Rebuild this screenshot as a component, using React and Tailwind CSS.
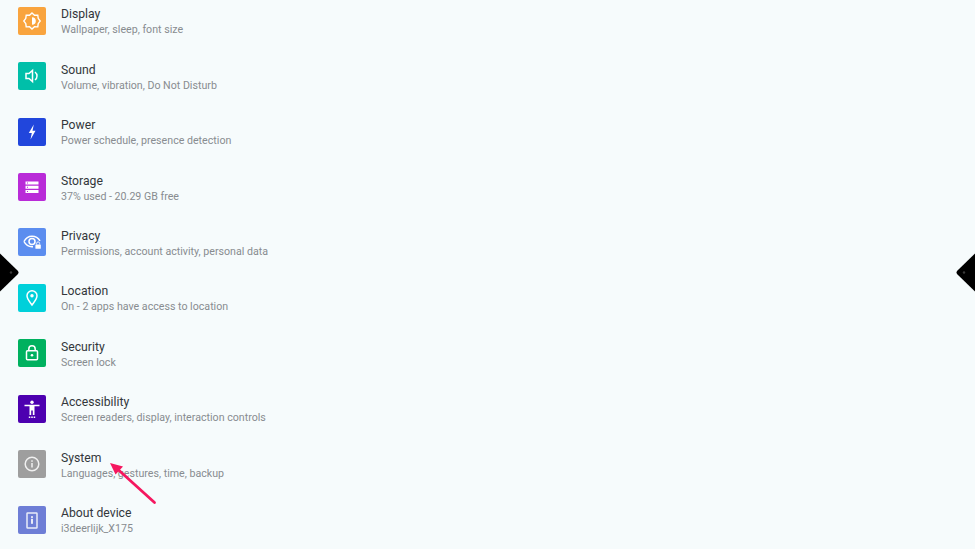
const W = { fill: "white" };
const S = { fill: "none", stroke: "white", strokeWidth: 1.5 };

const icons = {
  display: (
    <g>
      <path d="M14 6l2.500 2.200 3.300-.100.400 3.200L22.200 14l-2 2.700-.4 3.200-3.300-.100L14 22l-2.500-2.200-3.300.100-.4-3.200L5.800 14l2-2.700.4-3.200 3.300.100z" fill="none" stroke="white" strokeWidth="1.400" />
      <path d="M14 10.200a3.800 3.800 0 0 1 0 7.600z" {...W} />
    </g>
  ),
  sound: (
    <g>
      <path d="M8 11.500h3l3.500-3v11l-3.500-3H8z" fill="none" stroke="white" strokeWidth="1.500" />
      <path d="M17 10a5 5 0 0 1 0 8" fill="none" stroke="white" strokeWidth="1.500" />
    </g>
  ),
  power: <path d="M15.800 6.500l-5 8.500h3l-1.300 6.500 5-8.800h-3z" {...W} />,
  storage: (
    <g>
      <path fillRule="evenodd" d="M7.500 8.500h13v3h-13zM9 9.500h1v1H9z" {...W} />
      <path fillRule="evenodd" d="M7.500 12.700h13v3h-13zM9 13.700h1v1H9z" {...W} />
      <path fillRule="evenodd" d="M7.500 16.900h13v3h-13zM9 17.900h1v1H9z" {...W} />
    </g>
  ),
  privacy: (
    <g>
      <path d="M6 13.500c1.700-3.300 4.700-5.200 8-5.200s6.200 1.600 8 4.600" {...S} />
      <path d="M6 13.500c1.700 3.300 4.700 5.200 8 5.200h1" {...S} />
      <circle cx="14" cy="13.500" r="3" {...S} />
      <rect x="17.400" y="16.400" width="5.400" height="4.400" rx=".6" {...W} />
      <path d="M18.600 16.400v-1a1.500 1.500 0 0 1 3 0v1" fill="none" stroke="white" strokeWidth=".9" />
    </g>
  ),
  location: (
    <g>
      <path d="M14 6.800a5 5 0 0 0-5 5c0 3.400 3.400 6.800 5 9.200 1.600-2.400 5-5.800 5-9.200a5 5 0 0 0-5-5z" {...S} />
      <circle cx="14" cy="11.800" r="1.700" {...W} />
    </g>
  ),
  security: (
    <g>
      <rect x="8.500" y="11.800" width="11" height="9" rx="1" {...S} />
      <path d="M10.800 11.800V10a3.200 3.200 0 0 1 6.400 0v1.800" {...S} />
      <circle cx="14" cy="16.300" r="1.300" {...W} />
    </g>
  ),
  accessibility: (
    <g>
      <circle cx="14" cy="7.300" r="1.700" {...W} />
      <path d="M6.500 9.800h15v1.500h-5V20h-1.700v-4.500h-1.600V20h-1.700v-8.700h-5z" {...W} />
      <rect x="10.800" y="21.500" width="1.500" height="1.500" {...W} />
      <rect x="13.250" y="21.500" width="1.500" height="1.500" {...W} />
      <rect x="15.700" y="21.500" width="1.500" height="1.500" {...W} />
    </g>
  ),
  system: (
    <g opacity=".85">
      <circle cx="14" cy="14" r="6.800" {...S} />
      <rect x="13.250" y="13" width="1.500" height="4.500" {...W} />
      <rect x="13.250" y="10.300" width="1.500" height="1.500" {...W} />
    </g>
  ),
  about: (
    <g opacity=".85">
      <rect x="9" y="7" width="10" height="15" rx=".6" {...S} />
      <rect x="13" y="12.800" width="2" height="5" {...W} />
      <rect x="13" y="10.200" width="2" height="1.700" {...W} />
    </g>
  ),
};

const rows = [
  { k: "display", c: "bg-[#f9a43e]", t: "Display", s: "Wallpaper, sleep, font size" },
  { k: "sound", c: "bg-[#00bfa9]", t: "Sound", s: "Volume, vibration, Do Not Disturb" },
  { k: "power", c: "bg-[#2146dc]", t: "Power", s: "Power schedule, presence detection" },
  { k: "storage", c: "bg-[#b92bd8]", t: "Storage", s: "37% used - 20.29 GB free" },
  { k: "privacy", c: "bg-[#5b8def]", t: "Privacy", s: "Permissions, account activity, personal data" },
  { k: "location", c: "bg-[#00d0da]", t: "Location", s: "On - 2 apps have access to location" },
  { k: "security", c: "bg-[#00b15f]", t: "Security", s: "Screen lock" },
  { k: "accessibility", c: "bg-[#4d00b0]", t: "Accessibility", s: "Screen readers, display, interaction controls" },
  { k: "system", c: "bg-[#9e9e9e]", t: "System", s: "Languages, gestures, time, backup" },
  { k: "about", c: "bg-[#6e7ed6]", t: "About device", s: "i3deerlijk_X175" },
];

function Row({ k, c, t, s }) {
  return (
    <div className="flex h-[55.44px] shrink-0 items-center pl-[18px]">
      <div className={`mr-[15px] h-[28px] w-[28px] shrink-0 rounded-[2px] ${c}`}>
        <svg width="28" height="28" viewBox="0 0 28 28">{icons[k]}</svg>
      </div>
      <div className="flex flex-col pt-[2px]">
        <div className="text-[12.2px] leading-[16px] text-[#33373b]">{t}</div>
        <div className="text-[10.65px] leading-[15px] text-[#888c90]">{s}</div>
      </div>
    </div>
  );
}

export default function App() {
  return (
    <div
      className="relative h-[549px] w-[975px] overflow-hidden bg-[#f6fbfc]"
      style={{ fontFamily: "Roboto, sans-serif" }}
    >
      <div className="-mt-[7px] flex flex-col">
        {rows.map((r) => (
          <Row key={r.k} {...r} />
        ))}
      </div>

      <div className="absolute left-0 top-[253px] h-[39px] w-[20px]">
        <svg width="20" height="39" viewBox="0 0 20 39">
          <path d="M0 0.500L17.500 17.500Q19.500 19.500 17.500 21.500L0 38.500Z" fill="#000" />
          <circle cx="11" cy="19.500" r="1.200" fill="#3a3a3a" />
        </svg>
      </div>
      <div className="absolute right-0 top-[253px] h-[39px] w-[20px]">
        <svg width="20" height="39" viewBox="0 0 20 39">
          <path d="M20 0.500L2.500 17.500Q0.500 19.500 2.500 21.500L20 38.500Z" fill="#000" />
          <circle cx="9" cy="19.500" r="1.200" fill="#3a3a3a" />
        </svg>
      </div>

      <svg className="absolute left-[105px] top-[458px]" width="55" height="50" viewBox="0 0 55 50">
        <path d="M49.500 44.500L13 11.500" stroke="#f5175f" strokeWidth="2.800" strokeLinecap="round" fill="none" />
        <path d="M5 5l13 3.500-7.500 8z" fill="#f5175f" />
      </svg>
    </div>
  );
}
